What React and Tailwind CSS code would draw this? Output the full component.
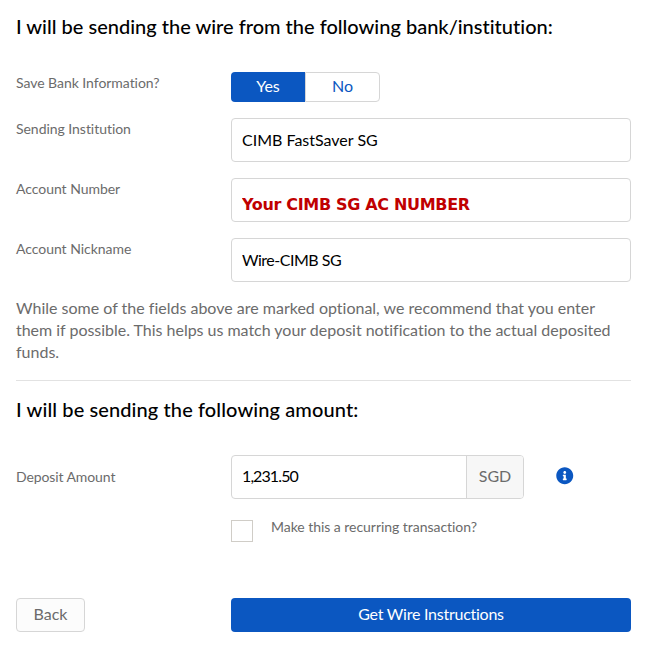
import React, { useState } from 'react';
import { FaInfoCircle } from 'react-icons/fa';

const FormRow = ({ label, children }) => (
  <div className="flex items-start">
    <label className="w-[215px] shrink-0 text-[14px] leading-[22px] tracking-[-0.04px] text-[#6b6b6b]">{label}</label>
    {children}
  </div>
);

const inputClass = 'h-11 w-[400px] rounded border border-[#d6d6d6] bg-white px-2.5 pb-0.5 text-[16px] text-black outline-none';

const App = () => {
  const [saveBank, setSaveBank] = useState(true);
  const [institution, setInstitution] = useState('CIMB FastSaver SG');
  const [accountNumber, setAccountNumber] = useState('Your CIMB SG AC NUMBER');
  const [nickname, setNickname] = useState('Wire-CIMB SG');
  const [amount, setAmount] = useState('1,231.50');
  const [recurring, setRecurring] = useState(false);

  return (
    <div className="h-[650px] w-[669px] bg-white pl-4 pt-3 font-[Lato,sans-serif] [font-variant-ligatures:none]">
      <div className="w-[615px]">
        <h2 className="text-[20px] font-medium leading-7 text-black">
          I will be sending the wire from the following bank/institution:
        </h2>

        <div className="mt-8 flex flex-col gap-4">
          <FormRow label="Save Bank Information?">
            <div className="flex h-[30px] text-[16px]">
              <button
                className={saveBank ? 'w-[74px] rounded-l bg-[#0b57c1] pb-0.5 text-white' : 'w-[74px] rounded-l border border-r-0 border-[#d6d6d6] pb-0.5 text-[#0b57c1]'}
                onClick={() => setSaveBank(true)}
              >
                Yes
              </button>
              <button
                className={saveBank ? 'w-[75px] rounded-r border border-[#d6d6d6] pb-0.5 text-[#0b57c1]' : 'w-[75px] rounded-r bg-[#0b57c1] pb-0.5 text-white'}
                onClick={() => setSaveBank(false)}
              >
                No
              </button>
            </div>
          </FormRow>

          <FormRow label="Sending Institution">
            <input className={inputClass} value={institution} onChange={(e) => setInstitution(e.target.value)} />
          </FormRow>

          <FormRow label="Account Number">
            <input
              className="h-11 w-[400px] rounded border border-[#d6d6d6] bg-white px-2.5 pt-2 font-['DejaVu_Sans',sans-serif] text-[16px] font-bold tracking-[-0.33px] text-[#c00000] outline-none"
              value={accountNumber}
              onChange={(e) => setAccountNumber(e.target.value)}
            />
          </FormRow>

          <FormRow label="Account Nickname">
            <input
              className={`${inputClass} tracking-[-0.5px]`}
              value={nickname}
              onChange={(e) => setNickname(e.target.value)}
            />
          </FormRow>
        </div>

        <p className="mt-[15px] text-[16px] leading-[22px] text-[#6b6b6b]">
          While some of the fields above are marked optional, we recommend that you enter<br />
          <span className="tracking-[-0.02px]">them if possible. This helps us match your deposit notification to the actual deposited</span><br />
          funds.
        </p>

        <hr className="mt-[17px] border-[#e2e2e2]" />

        <h2 className="mt-[14px] text-[20px] font-medium leading-7 tracking-[0.1px] text-black">
          I will be sending the following amount:
        </h2>

        <div className="mt-8 flex items-center">
          <label className="w-[215px] text-[14px] leading-[22px] tracking-[-0.1px] text-[#6b6b6b]">Deposit Amount</label>
          <div className="flex h-11 w-[293px] overflow-hidden rounded border border-[#d6d6d6]">
            <input
              className="w-[234px] px-2.5 pb-0.5 text-[16px] tracking-[-0.9px] text-black outline-none"
              value={amount}
              onChange={(e) => setAmount(e.target.value)}
            />
            <span className="flex flex-1 items-center justify-center border-l border-[#d6d6d6] bg-[#f7f7f7] pb-0.5 text-[16px] text-[#6b6b6b]">
              SGD
            </span>
          </div>
          <FaInfoCircle className="mb-0.5 ml-8 size-[17.5px] text-[#0b57c1]" />
        </div>

        <div className="mt-[21px] flex pl-[215px]">
          <input
            type="checkbox"
            className="size-[22px] appearance-none border border-[#d0cdc7] bg-white checked:bg-[#0b57c1]"
            checked={recurring}
            onChange={(e) => setRecurring(e.target.checked)}
          />
          <span className="-mt-1 ml-[18px] text-[14px] leading-[22px] tracking-[-0.04px] text-[#6b6b6b]">Make this a recurring transaction?</span>
        </div>

        <div className="mt-14 flex h-[34px] text-[16px]">
          <button className="w-[69px] rounded border border-[#d6d6d6] bg-[#fcfcfc] pb-0.5 text-[#6b6b6b]">Back</button>
          <button className="ml-[146px] w-[400px] rounded bg-[#0b57c1] pb-0.5 tracking-[-0.25px] text-white">Get Wire Instructions</button>
        </div>
      </div>
    </div>
  );
};

export default App;
